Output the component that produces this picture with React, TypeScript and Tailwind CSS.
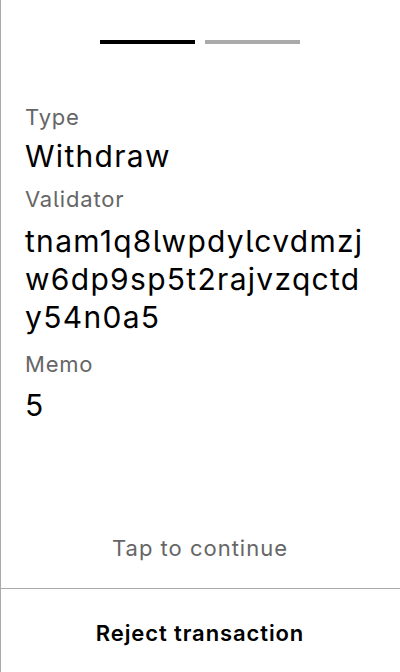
import React from 'react';

const Field: React.FC<{ label: string; value: string; labelMt: string; valueMt: string }> = ({ label, value, labelMt, valueMt }) => (
  <>
    <p className={`${labelMt} text-[22px] leading-[28px] tracking-[0.8px] text-[#666666]`}>{label}</p>
    <p className={`${valueMt} text-[30px] leading-[38px] tracking-[1.3px] text-black break-all`}>{value}</p>
  </>
);

const App: React.FC = () => {
  return (
    <div
      className="w-[400px] h-[672px] bg-white border-l border-[#aaaaaa] flex flex-col [font-feature-settings:'cv05']"
      style={{ fontFamily: 'Inter, "Noto Sans", sans-serif' }}
    >
      {/* Step indicator */}
      <div className="flex justify-center gap-[10px] pt-[40px] -ml-px">
        <div className="w-[95px] h-[4px] bg-black" />
        <div className="w-[95px] h-[4px] bg-[#aaaaaa]" />
      </div>

      {/* Transaction details */}
      <div className="flex-1 pl-[24px] pr-[28px]">
        <Field label="Type" value="Withdraw" labelMt="mt-[59px]" valueMt="mt-[6px]" />
        <Field label="Validator" value="tnam1q8lwpdylcvdmzjw6dp9sp5t2rajvzqctdy54n0a5" labelMt="mt-[10px]" valueMt="mt-[9px]" />
        <Field label="Memo" value="5" labelMt="mt-[14px]" valueMt="mt-[8px]" />
      </div>

      <p className="text-center text-[22px] leading-[28px] tracking-[1px] text-[#666666] mb-[26px] -ml-px">Tap to continue</p>

      {/* Reject */}
      <div className="border-t border-[#aaaaaa] h-[84px] pt-[5px] flex items-center justify-center -ml-px">
        <span className="text-[22px] leading-[28px] tracking-[0.9px] font-semibold text-black">Reject transaction</span>
      </div>
    </div>
  );
};

export default App;
